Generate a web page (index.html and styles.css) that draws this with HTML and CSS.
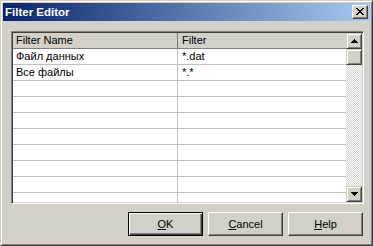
FILE: index.html
```html
<!DOCTYPE html>
<html>
<head>
<meta charset="utf-8">
<link rel="stylesheet" href="styles.css">
</head>
<body>
<div class="window">
  <div class="titlebar">
    <span class="title">Filter Editor</span>
    <div class="close">
      <svg width="8" height="7" viewBox="0 0 8 7"><path d="M0 0h2v1h-2zM6 0h2v1h-2zM1 1h2v1h-2zM5 1h2v1h-2zM2 2h4v1h-4zM3 3h2v1h-2zM2 4h4v1h-4zM1 5h2v1h-2zM5 5h2v1h-2zM0 6h2v1h-2zM6 6h2v1h-2z" fill="#000"/></svg>
    </div>
  </div>
  <div class="client">
    <div class="grid">
      <div class="table">
        <div class="row head"><div class="cell c1">Filter Name</div><div class="cell c2">Filter</div></div>
        <div class="row"><div class="cell c1">Файл данных</div><div class="cell c2">*.dat</div></div>
        <div class="row"><div class="cell c1">Все файлы</div><div class="cell c2">*.*</div></div>
        <div class="row"><div class="cell c1"></div><div class="cell c2"></div></div>
        <div class="row"><div class="cell c1"></div><div class="cell c2"></div></div>
        <div class="row"><div class="cell c1"></div><div class="cell c2"></div></div>
        <div class="row"><div class="cell c1"></div><div class="cell c2"></div></div>
        <div class="row"><div class="cell c1"></div><div class="cell c2"></div></div>
        <div class="row"><div class="cell c1"></div><div class="cell c2"></div></div>
        <div class="row"><div class="cell c1"></div><div class="cell c2"></div></div>
        <div class="row"><div class="cell c1"></div><div class="cell c2"></div></div>
      </div>
      <div class="scrollbar">
        <div class="sbtn"><svg width="7" height="4" viewBox="0 0 7 4"><path d="M3 0h1v1h1v1h1v1h1v1h-7v-1h1v-1h1v-1h1z" fill="#000"/></svg></div>
        <div class="thumb"></div>
        <div class="track"></div>
        <div class="sbtn"><svg width="7" height="4" viewBox="0 0 7 4"><path d="M0 0h7v1h-1v1h-1v1h-1v1h-1v-1h-1v-1h-1v-1h-1z" fill="#000"/></svg></div>
      </div>
    </div>
    <div class="buttons">
      <div class="btn default"><span><u>O</u>K</span></div>
      <div class="btn"><span><u>C</u>ancel</span></div>
      <div class="btn"><span><u>H</u>elp</span></div>
    </div>
  </div>
</div>
</body>
</html>
```
FILE: styles.css
```css
* { box-sizing: border-box; margin: 0; padding: 0; }
html, body { width: 373px; height: 246px; overflow: hidden; background: #d4d0c8; }
body { font-family: "Liberation Sans", Arial, sans-serif; font-size: 11px; color: #000; }

.window {
  width: 373px; height: 246px;
  border: 1px solid; border-color: #d4d0c8 #404040 #404040 #d4d0c8;
  box-shadow: inset 1px 1px #fff, inset -1px -1px #808080;
  padding: 2px;
  display: flex; flex-direction: column;
  background: #d4d0c8;
}

.titlebar {
  height: 18px; flex: none;
  background: linear-gradient(to right, #0a246a, #a6caf0);
  display: flex; align-items: center; justify-content: space-between;
  padding: 0 2px 0 2px;
}
.title { color: #fff; font-weight: bold; font-size: 11.5px; }
.close {
  width: 16px; height: 14px;
  background: #d4d0c8;
  border: 1px solid; border-color: #fff #404040 #404040 #fff;
  box-shadow: inset -1px -1px #808080;
  display: flex; align-items: center; justify-content: center;
  padding: 0 1px 1px 0;
}
.close svg { display: block; }

.client {
  flex: 1;
  display: flex; flex-direction: column;
  padding: 10px 6px 7px 8px;
  gap: 8px;
}

.grid {
  height: 173px; flex: none;
  border: 1px solid; border-color: #808080 #fff #fff #808080;
  box-shadow: inset 1px 1px #404040, inset -1px -1px #d4d0c8;
  padding: 1px;
  display: flex;
}
.table { flex: 1; background: #fff; overflow: hidden; }
.row { display: flex; height: 16px; border-bottom: 1px solid #c0c0c0; }
.row.head { background: #d4d0c8; border-bottom-color: #808080; }
.cell { line-height: 15px; white-space: nowrap; overflow: hidden; font-size: 11px; }
.c1 { width: 165px; border-right: 1px solid #c0c0c0; padding-left: 3px; }
.head .c1 { border-right-color: #808080; }
.c2 { flex: 1; padding-left: 4px; }

.scrollbar { width: 16px; display: flex; flex-direction: column; }
.sbtn, .thumb {
  width: 16px; height: 16px; flex: none;
  background: #d4d0c8;
  border: 1px solid; border-color: #d4d0c8 #404040 #404040 #d4d0c8;
  box-shadow: inset 1px 1px #fff, inset -1px -1px #808080;
  display: flex; align-items: center; justify-content: center;
}
.sbtn svg { display: block; }
.track {
  flex: 1;
  background: repeating-conic-gradient(#fff 0 25%, #d4d0c8 0 50%) 0 0 / 2px 2px;
}

.buttons { display: flex; justify-content: flex-end; gap: 5px; margin-right: 1px; }
.btn {
  width: 75px; height: 24px;
  background: #d4d0c8;
  border: 1px solid; border-color: #fff #404040 #404040 #fff;
  box-shadow: inset -1px -1px #808080;
  display: flex; align-items: center; justify-content: center;
}
.btn.default {
  border: 1px solid #000;
  box-shadow: inset 1px 1px #fff, inset -1px -1px #404040, inset -2px -2px #808080;
}
.btn u { text-decoration: underline; text-underline-offset: 1px; }
```
